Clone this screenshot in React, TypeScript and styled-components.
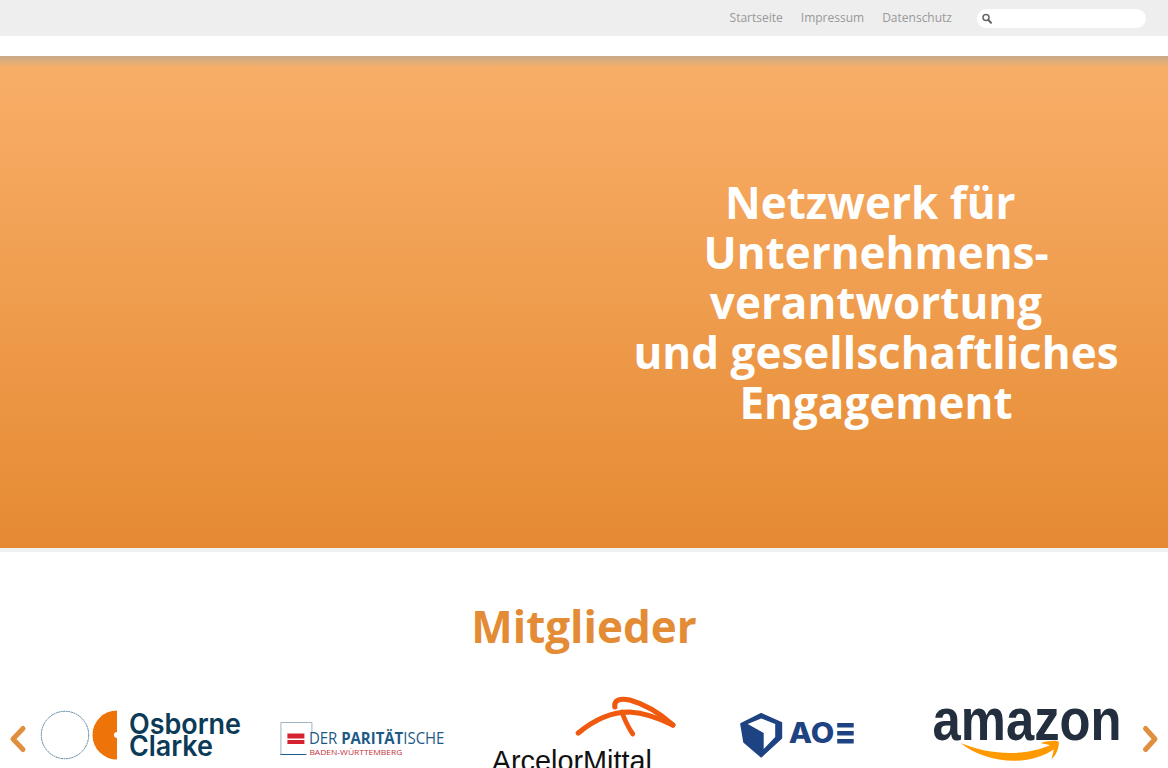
import React from "react";
import styled, { createGlobalStyle } from "styled-components";

const Global = createGlobalStyle`
  html, body { margin: 0; padding: 0; height: 768px; overflow: hidden; background: #fff; }
  body { font-family: "Open Sans", "Liberation Sans", sans-serif; }
`;

const Page = styled.div`
  display: flex;
  flex-direction: column;
  width: 1168px;
  height: 768px;
  overflow: hidden;
`;

const TopBar = styled.header`
  display: flex;
  align-items: center;
  justify-content: flex-end;
  flex: none;
  height: 36px;
  margin-bottom: 20px;
  padding-right: 22px;
  background: #eeeeee;
`;

const Nav = styled.nav`
  display: flex;
  gap: 18px;
  margin-right: 25px;
`;

const NavLink = styled.a`
  font-size: 12px;
  line-height: 16px;
  color: #999999;
  text-decoration: none;
`;

const Search = styled.div`
  display: flex;
  align-items: center;
  width: 169px;
  height: 19px;
  padding-left: 5px;
  box-sizing: border-box;
  border-radius: 10px;
  background: #ffffff;
`;

const Hero = styled.section`
  display: grid;
  grid-template-columns: 1fr 1fr;
  align-items: center;
  flex: none;
  height: 492px;
  background:
    linear-gradient(rgba(150, 165, 170, 0.5), rgba(150, 165, 170, 0) 12px),
    linear-gradient(#f9af69, #e58a32);
`;

const HeroTitle = styled.h1`
  grid-column: 2;
  margin: 0;
  font-size: 44px;
  font-weight: 700;
  line-height: 50px;
  text-align: center;
  color: #ffffff;
`;

const Divider = styled.div`
  flex: none;
  height: 4px;
  background: #eef2f0;
`;

const Heading = styled.h2`
  flex: none;
  margin: 44px 0 0;
  font-size: 44px;
  font-weight: 700;
  line-height: 60px;
  text-align: center;
  color: #e38c35;
`;

const Carousel = styled.div`
  display: flex;
  align-items: flex-start;
  flex: none;
  height: 80px;
  margin-top: 39px;
`;

const ArrowButton = styled.button`
  display: flex;
  align-items: center;
  justify-content: center;
  flex: none;
  width: 30px;
  height: 30px;
  margin-top: 29px;
  padding: 0;
  border: 0;
  background: none;
`;

const Track = styled.div`
  display: grid;
  grid-template-columns: repeat(5, 1fr);
  flex: 1;
  height: 80px;
`;

const Logo = styled.svg`
  display: block;
  width: 100%;
  height: 80px;
  overflow: visible;
`;

const Chevron = ({ dir }: { dir: "left" | "right" }) => (
  <svg width="30" height="30" viewBox="0 0 30 30" aria-hidden="true">
    <path
      d={dir === "left" ? "M23 4.5 L13 15 L23 25.5" : "M7.5 4.5 L17 15 L7.5 25.5"}
      fill="none"
      stroke="#e08f3f"
      strokeWidth="5"
      strokeLinecap="round"
      strokeLinejoin="round"
    />
  </svg>
);

const Osborne = () => (
  <Logo viewBox="30 695 221.6 80">
    <circle cx="65" cy="735" r="23.7" fill="none" stroke="#2f6480" strokeWidth="0.8" strokeDasharray="2 0.6" />
    <path d="M117 710.5 A24.5 24.5 0 0 0 117 759.5 V738 A3 3 0 0 1 117 732 Z" fill="#ee7309" />
    <g fill="#0b3b57" fontFamily="Inter, sans-serif" fontWeight="600" fontSize="28">
      <text x="129" y="734" textLength="112" lengthAdjust="spacingAndGlyphs">Osborne</text>
      <text x="129" y="756.5" textLength="84" lengthAdjust="spacingAndGlyphs">Clarke</text>
    </g>
  </Logo>
);

const Paritaetische = () => (
  <Logo viewBox="251.6 695 221.6 80">
    <path d="M311.5 732 V722.5 H280.5 V754.5" fill="none" stroke="#9fb4c4" strokeWidth="1" />
    <path d="M280 754.5 H306" fill="none" stroke="#1d5a86" strokeWidth="1" />
    <rect x="287" y="733.5" width="17" height="5" fill="#d6222f" />
    <rect x="287" y="740" width="17" height="4" fill="#d6222f" />
    <text x="308.5" y="744.5" fontFamily="'Open Sans', sans-serif" fontSize="15.5" fill="#1d5a86" textLength="135.5" lengthAdjust="spacingAndGlyphs">
      DER <tspan fontWeight="700">PARITÄT</tspan>ISCHE
    </text>
    <text x="309" y="755" fontFamily="'Open Sans', sans-serif" fontSize="7.6" fill="#c2323c" textLength="93" lengthAdjust="spacingAndGlyphs">
      BADEN-WÜRTTEMBERG
    </text>
  </Logo>
);

const Arcelor = () => (
  <Logo viewBox="473.2 695 221.6 80">
    <g fill="none" stroke="#f05a0f" strokeLinecap="round" strokeLinejoin="round">
      <path d="M578.5 733 C594 720 610 712 630 712 C646 713 661 719 673 725" strokeWidth="5.2" />
      <path d="M615 707 C614 700 620 698 630 700 C648 705 662 715 673 725" strokeWidth="5.2" />
      <path d="M622 712 C625 720 628 727 633 734" strokeWidth="4.8" />
    </g>
    <text x="492" y="771" fontFamily="'Liberation Sans', sans-serif" fontSize="29" fill="#111111" textLength="160" lengthAdjust="spacingAndGlyphs">
      ArcelorMittal
    </text>
  </Logo>
);

const Aoe = () => (
  <Logo viewBox="694.8 695 221.6 80">
    <path
      d="M761 714 L781 723 V738 L761 756.5 L744 742 L741 724 Z"
      fill="#1e4382"
      stroke="#1e4382"
      strokeWidth="2"
      strokeLinejoin="round"
    />
    <path d="M747.5 724 L761 718.5 L775 724 V737 L763.5 749 V733 Z" fill="#ffffff" />
    <text x="788.5" y="743" fontFamily="Inter, sans-serif" fontWeight="800" fontSize="28" fill="#1e4382" textLength="45.5" lengthAdjust="spacingAndGlyphs">
      AO
    </text>
    <g fill="#1e4382">
      <rect x="837" y="723" width="16.5" height="4.5" />
      <rect x="837" y="731" width="16.5" height="4.5" />
      <rect x="837" y="739" width="16.5" height="4.5" />
    </g>
  </Logo>
);

const Amazon = () => (
  <Logo viewBox="916.4 695 221.6 80">
    <text x="933" y="739.5" fontFamily="'Liberation Sans', sans-serif" fontWeight="700" fontSize="60" fill="#232f3e" textLength="189" lengthAdjust="spacingAndGlyphs">
      amazon
    </text>
    <path d="M961 743 C985 763 1030 768 1056 748 L1052 744.5 C1025 757 990 755 961 743 Z" fill="#ff9900" />
    <path d="M1041 743 C1048 741 1056 740 1059 741.5 C1060 746 1057 755 1052 759 C1053 754 1055 749 1054 746.5 C1052 745 1046 744.5 1041 743 Z" fill="#ff9900" />
  </Logo>
);

const SearchIcon = () => (
  <svg width="10" height="11" viewBox="0 0 10 11" aria-hidden="true">
    <circle cx="4" cy="4.5" r="3" fill="none" stroke="#666" strokeWidth="1.5" />
    <path d="M6.3 7 L9 9.8" stroke="#666" strokeWidth="2" strokeLinecap="round" />
  </svg>
);

export default function App() {
  return (
    <Page>
      <Global />
      <TopBar>
        <Nav>
          <NavLink href="#">Startseite</NavLink>
          <NavLink href="#">Impressum</NavLink>
          <NavLink href="#">Datenschutz</NavLink>
        </Nav>
        <Search>
          <SearchIcon />
        </Search>
      </TopBar>
      <Hero>
        <HeroTitle>
          Netzwerk für&nbsp;
          <br />
          Unternehmens-
          <br />
          verantwortung
          <br />
          und gesellschaftliches
          <br />
          Engagement
        </HeroTitle>
      </Hero>
      <Divider />
      <Heading>Mitglieder</Heading>
      <Carousel>
        <ArrowButton aria-label="Zurück">
          <Chevron dir="left" />
        </ArrowButton>
        <Track>
          <Osborne />
          <Paritaetische />
          <Arcelor />
          <Aoe />
          <Amazon />
        </Track>
        <ArrowButton aria-label="Weiter">
          <Chevron dir="right" />
        </ArrowButton>
      </Carousel>
    </Page>
  );
}
